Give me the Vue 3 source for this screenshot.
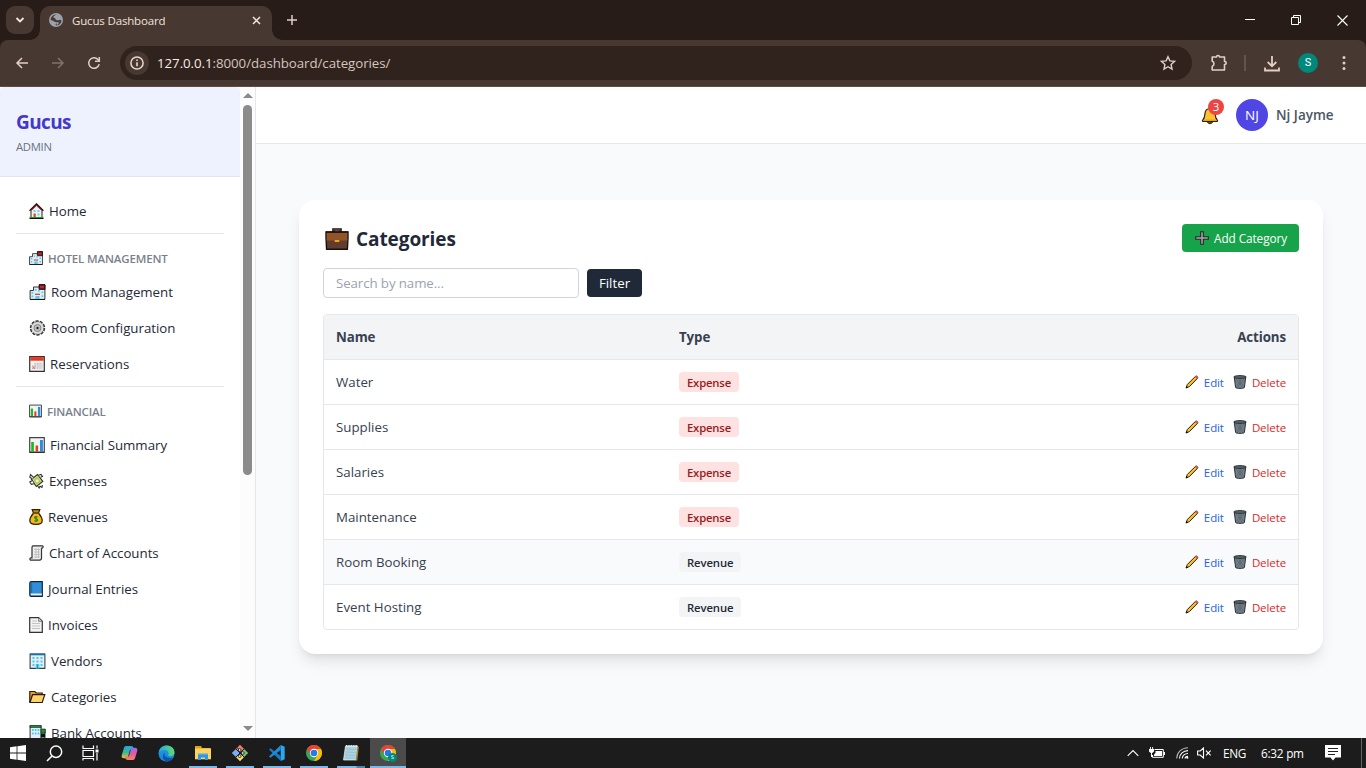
<script setup>
const sections = [
  { items: [{ icon: 'home', w: 15, label: 'Home' }] },
  {
    title: 'HOTEL MANAGEMENT', icon: 'hotel', w: 14,
    items: [
      { icon: 'hotel', w: 17, label: 'Room Management' },
      { icon: 'gear', w: 17, label: 'Room Configuration' },
      { icon: 'calendar', w: 16, label: 'Reservations' }
    ]
  },
  {
    title: 'FINANCIAL', icon: 'bars', w: 13,
    items: [
      { icon: 'bars', w: 16, label: 'Financial Summary' },
      { icon: 'money', w: 15, label: 'Expenses' },
      { icon: 'bag', w: 14, label: 'Revenues' },
      { icon: 'scroll', w: 15, label: 'Chart of Accounts' },
      { icon: 'book', w: 14, label: 'Journal Entries' },
      { icon: 'page', w: 14, label: 'Invoices' },
      { icon: 'office', w: 17, label: 'Vendors' },
      { icon: 'folder', w: 17, label: 'Categories' },
      { icon: 'bank', w: 17, label: 'Bank Accounts' }
    ]
  }
]
const rows = [
  { name: 'Water', type: 'Expense' },
  { name: 'Supplies', type: 'Expense' },
  { name: 'Salaries', type: 'Expense' },
  { name: 'Maintenance', type: 'Expense' },
  { name: 'Room Booking', type: 'Revenue', hover: true },
  { name: 'Event Hosting', type: 'Revenue' }
]
const tasks = [
  { icon: 't-files', open: true },
  { icon: 't-git', open: true },
  { icon: 't-code', open: true },
  { icon: 't-chrome', open: true },
  { icon: 't-note', open: true, stacked: true },
  { icon: 't-chrome', open: true, active: true }
]
</script>

<template>
  <div class="screen">
    <svg class="defs" aria-hidden="true">
      <defs>
        <linearGradient id="edgeA" x1="0" y1="0" x2="1" y2="0"><stop offset="0" stop-color="#2aa5e8" /><stop offset="1" stop-color="#5fdc6a" /></linearGradient>
        <linearGradient id="edgeB" x1="0" y1="0" x2="0" y2="1"><stop offset="0" stop-color="#1b9de2" /><stop offset="1" stop-color="#1683dc" /></linearGradient>
        <linearGradient id="copA" x1="0" y1="0" x2="0" y2="1"><stop offset="0" stop-color="#1fa3ee" /><stop offset=".55" stop-color="#3fb98a" /><stop offset="1" stop-color="#f2c230" /></linearGradient>
        <linearGradient id="copB" x1="0" y1="0" x2="0" y2="1"><stop offset="0" stop-color="#9a6be8" /><stop offset=".5" stop-color="#e25aa8" /><stop offset="1" stop-color="#f5855f" /></linearGradient>
      </defs>
      <symbol id="home" viewBox="0 0 15 16">
        <path d="M2 7.500V15h11V7.500L7.500 2z" fill="#f2f2f2" stroke="#222" />
        <path d="M.6 7.800 7.500 1l6.900 6.800" fill="none" stroke="#2b1110" stroke-width="1.500" /><path d="M2.500 7.400 7.500 2.700l5 4.700" fill="none" stroke="#c2312b" stroke-width=".8" />
        <path d="M4.500 7h2v2h-2zM8.500 7h2v2h-2zM8.500 10.500h2v2h-2z" fill="#5fd0f5" /><path d="M4.500 10.500h2.300V14.500H4.500z" fill="#e5472f" /><path d="M.5 14h14v1H.5z" fill="#1d9a25" /><path d="M.5 15h14v1H.5z" fill="#111" />
      </symbol>
      <symbol id="hotel" viewBox="0 0 16 16">
        <path d="M.6 6.500H4V3h6V1h5.400v14.400H.6z" fill="#e4edf2" stroke="#333" />
        <path d="M9.600.6h5.900v4.800H9.600z" fill="#7e1420" stroke="#111" stroke-width=".9" /><path d="M11.300 1.800v2.400M13.700 1.800v2.400M11.300 3h2.400" stroke="#ed3445" stroke-width=".8" />
        <path d="M2 8h1.700v1.700H2zM2 11.500h1.700v1.700H2zM5.300 5H7v1.700H5.300zM8.500 6h1.700v1.700H8.500zM12 7.500h1.700v1.700H12zM12 11.300h1.700V13H12zM6 12h4v3H6z" fill="#49cdf3" /><path d="M5.500 9.700h5v1.200h-5z" fill="#cf3b35" /><path d="M.5 15h15v.9H.5z" fill="#111" />
      </symbol>
      <symbol id="gear" viewBox="0 0 16 16">
        <circle cx="8" cy="8" r="6.900" fill="none" stroke="#333" stroke-width="1.600" stroke-dasharray="3.200 1.130" /><circle cx="8" cy="8" r="6.200" fill="#dedede" stroke="#555" stroke-width=".7" stroke-dasharray="2 1.200" /><circle cx="8" cy="8" r="3.500" fill="#c9c9c9" stroke="#777" stroke-width=".9" /><circle cx="8" cy="8" r="2" fill="#aaa" /><circle cx="8" cy="8" r="1.100" fill="#111" />
      </symbol>
      <symbol id="calendar" viewBox="0 0 16 16">
        <path d="M.7.7h14.600v14.600H.7z" fill="#f1f1f1" stroke="#333" stroke-width="1.200" /><path d="M1.200 1.100h13.600v3.600H1.200z" fill="#e8391d" /><path d="M5.500 7h7.800v5.800H3V9.500h2.500z" fill="#c4c4c4" /><path d="M5.500 9h7.800M3 11h10.300M7.500 7v6M10 7v6M12 7v6" stroke="#f7f7f7" stroke-width=".5" /><path d="m3.500 10.500 2.300 2.300m0-2.300-2.300 2.300" stroke="#ef6b4d" />
      </symbol>
      <symbol id="bars" viewBox="0 0 16 16">
        <path d="M.7.7h14.600v14.600H.7z" fill="#f3f3f3" stroke="#444" stroke-width="1.200" /><path d="M2.200 5h2.700v9.500H2.200z" fill="#18bd22" /><path d="M6.600 8.500h2.500v6H6.600z" fill="#e83c25" /><path d="M11 3h2.900v11.500H11z" fill="#278dde" /><path d="M1 14.700h14v.9H1z" fill="#222" />
      </symbol>
      <symbol id="money" viewBox="0 0 15 16">
        <path d="m2.500 6.300 6-4.800 5.300 7-6.500 5z" fill="#dbe59c" stroke="#303510" stroke-width="1.200" /><path d="m4.300 6.700 4-3.200 3.800 5-4.500 3.300z" fill="#b4c66c" /><circle cx="8.200" cy="7.700" r="1.500" fill="#edf3bf" /><path d="M4.800 4.700 1.500 1.500.8 4.200l2.400 1.500M3 7.700.8 9l1.500 2.300 2.700-.5M8.700 13l1.500 2 .8-1.700 2 1 .3-2.300M9.500 2.200l2.500-.7 1.500 2-2 .8" fill="#fff" stroke="#333" stroke-width="1.100" />
      </symbol>
      <symbol id="bag" viewBox="0 0 14 16">
        <path d="M4.200 4.500C2 7 .8 9 .8 11.700c0 2.600 1.700 3.600 6.200 3.600s6.200-1 6.200-3.600c0-2.700-1.200-4.700-3.400-7.200z" fill="#f7b51a" stroke="#2a2106" stroke-width="1.200" /><path d="M3.200.7h7.600L9.500 4.200h-5z" fill="#c78b13" stroke="#2a2106" stroke-width="1.200" /><path d="M4 4.500h6" stroke="#79500a" /><path d="M8.600 8c-3.500-1.300-3.800 1.500-1.500 1.900 2.500.4 1.700 3-1.700 1.800M7 6.900v6" fill="none" stroke="#16911e" stroke-width="1.100" />
      </symbol>
      <symbol id="scroll" viewBox="0 0 15 16">
        <path d="M4 .8h9.500c1 0 1 2.500-1 2.500V13c0 1.500-.8 2.200-2 2.200H2c-1.500 0-1.500-2.400 0-2.400h1V3c0-1 .3-2.200 1-2.200z" fill="#ededed" stroke="#333" stroke-width="1.200" /><path d="M5 4.500h6M5 7h6M5 9.500h6M5 12h6M7 3v10M9.500 3v10" stroke="#b4b4b4" stroke-width=".7" />
      </symbol>
      <symbol id="book" viewBox="0 0 14 16">
        <path d="M2.300.7h11v14.600H2.200C1.200 15.300.8 14.800.8 14V2.200c0-1 .5-1.500 1.500-1.500z" fill="#308fd8" stroke="#10263a" stroke-width="1.200" /><path d="M2.200 12.500h10.600v1.800H2.200c-.8 0-.8-1.800 0-1.800z" fill="#eee" /><path d="M2.700 1.500v10.500" stroke="#1d6bab" />
      </symbol>
      <symbol id="page" viewBox="0 0 14 16">
        <path d="M.7.7h9L13.300 4.200v11.100H.7z" fill="#f3f3f3" stroke="#333" stroke-width="1.200" /><path d="M9.500.8v3.600h3.700" fill="#ccc" stroke="#777" stroke-width=".8" /><path d="M3 4h5M3 6.500h8M3 9h8M3 11.500h8" stroke="#c2c2c2" stroke-width="1" />
      </symbol>
      <symbol id="office" viewBox="0 0 16 16">
        <path d="M.6 1h14.800v14.400H.6z" fill="#e7eef3" stroke="#34424d" stroke-width="1.100" /><path d="M.5.500h15v1.800H.5z" fill="#1b6fae" /><path d="M3 4h2v2H3zM7 4h2v2H7zM11 4h2v2h-2zM3 7.500h2v2H3zM7 7.500h2v2H7zM11 7.500h2v2h-2zM3 11h2v2H3zM11 11h2v2h-2zM6.200 11h3.600v4.500H6.200z" fill="#45cdf4" /><path d="M8 11.500V15" stroke="#1679b8" stroke-width=".7" />
      </symbol>
      <symbol id="folder" viewBox="0 0 17 16">
        <path d="M.8 13.500V2.500h5l1.400 1.500h6v2" fill="#f29b1c" stroke="#2a1d08" stroke-width="1.200" /><path d="M3.500 5.700h12.300L13.200 13.500H1z" fill="#ffd36b" stroke="#2a1d08" stroke-width="1.200" />
      </symbol>
      <symbol id="bank" viewBox="0 0 16 16">
        <path d="M.6 1h10.900v14.400H.6zM11.500 4.500h4v11h-4z" fill="#e7eef3" stroke="#34424d" stroke-width="1.100" /><path d="M.5.400h11.200v2H.5zM11.500 4h4.200v4h-4.200z" fill="#159b36" stroke="#111" stroke-width=".6" /><path d="M2.500 4h1.700v2H2.500zM5.300 4H7v2H5.300zM8.100 4h1.700v2H8.100zM2.500 7.500h1.700v2H2.500zM5.300 7.500H7v2H5.300zM8.100 7.500h1.700v2H8.100z" fill="#45cdf4" /><path d="M11.300 8.500h4.200v4h-4.200z" fill="#111" />
      </symbol>
      <symbol id="bell" viewBox="0 0 18 20">
        <path d="M9 3.500c-3.600 0-4.900 2.500-5.100 5.500-.2 3.200-.7 4.700-2.100 6-.6.500-.4 1.300.3 1.500h13.800c.7-.2.900-1 .3-1.500-1.400-1.300-1.900-2.800-2.100-6-.2-3-1.500-5.500-5.100-5.500z" fill="#ffc12e" stroke="#2a210b" stroke-width="1.200" /><path d="M6.500 17c.3 2.200 4.700 2.200 5 0z" fill="#b37914" stroke="#2a210b" /><path d="M2.700 15.200h12.600" stroke="#d88b17" stroke-width=".9" />
      </symbol>
      <symbol id="case" viewBox="0 0 24 22">
        <path d="M8.500 4V1.500h7V4" fill="none" stroke="#1b1210" stroke-width="2.600" /><path d="M8.800 3.800V1.700h6.400v2.100" fill="none" stroke="#6d4233" stroke-width="1" /><path d="M1 4h22v6l-.6 11.200H1.600L1 10z" fill="#613b2c" stroke="#171210" stroke-width="1.400" /><path d="M1.700 4.700h20.600v7.800H1.700z" fill="#935428" /><path d="M9.700 12h4.600v2H9.700z" fill="#eaa619" /><path d="M1 4h22" stroke="#171210" stroke-width="1.300" />
      </symbol>
      <symbol id="pencil" viewBox="0 0 14 14"><path d="M1 13 2.300 9.500 10.600 1.200c.9-.8 2.800.9 2 2L4.400 11.600z" fill="#ffbf1f" stroke="#272015" stroke-width="1" /><path d="m10 2 1-1c.8-.5 2.400.9 1.800 1.900l-1 1z" fill="#e4515f" /><path d="m.8 13.300.8-2.400 1.500 1.600z" fill="#111" /></symbol>
      <symbol id="trash" viewBox="0 0 14 14"><path d="m1.300 2.500 1.300 10c.8 1.200 8 1.200 8.800 0l1.300-10z" fill="#727f86" stroke="#293136" stroke-width="1" /><path d="m3 4 6.500 8.500M5.500 4l5 7M11 4l-6.500 8.500M8.500 4l-5 7" stroke="#49565d" stroke-width=".5" /><ellipse cx="7" cy="2" rx="6.300" ry="1.400" fill="#59656b" stroke="#22292d" stroke-width=".9" /></symbol>
      <symbol id="plus" viewBox="0 0 14 14"><path d="M5.700.7h2.600v5h5v2.600h-5v5H5.700v-5h-5V5.700h5z" fill="#a9a9a9" stroke="#252525" stroke-width="1.100" /></symbol>

      <symbol id="t-files" viewBox="0 0 18 18"><path d="M1 3V2h6l1 2h8.500v11H1z" fill="#e5a00d" /><path d="M1 4.500h16v10.800H1z" fill="#fcd462" /><path d="M4 16V10.500h10V16h-3v-2.500H7V16z" fill="#2f96e8" /><path d="M4 9.500h10v1.500H4z" fill="#4aa9ef" /></symbol>
      <symbol id="t-git" viewBox="0 0 18 18"><path d="m9 .8 4.100 4.100L9 9 4.900 4.900z" fill="#f27e70" /><path d="M4.900 4.900 9 9l-4.100 4.100L.8 9z" fill="#79aef5" /><path d="M13.100 4.900 17.200 9l-4.100 4.100L9 9z" fill="#77c267" /><path d="m9 9 4.100 4.100L9 17.200l-4.100-4.100z" fill="#ffe06f" /><path d="M6.200 3.600 11.500 9M8.700 5.500v7.500M4.900 4.900l8.200 8.200M13.100 4.900l-8.200 8.200" stroke="#1c1c1c" stroke-width="1" /><circle cx="8.700" cy="6" r="1.400" fill="#eee" stroke="#222" stroke-width=".9" /><circle cx="11.800" cy="9" r="1.400" fill="#eee" stroke="#222" stroke-width=".9" /><circle cx="8.700" cy="12.200" r="1.400" fill="#eee" stroke="#222" stroke-width=".9" /></symbol>
      <symbol id="t-code" viewBox="0 0 18 18"><path d="m12.700 1 4 1.800v12.400L12.700 17z" fill="#2aa7f0" /><path d="M1 5.500 2.500 4.300 12.700 12v5z" fill="#167bc4" /><path d="M1 12.500 2.500 13.700 12.700 6V1z" fill="#1c8bd8" /></symbol>
      <symbol id="t-chrome" viewBox="0 0 18 18"><circle cx="9" cy="9" r="8" fill="#34a853" /><path d="M9 5h6.930A8 8 0 0 1 9 17l3.460-6z" fill="#fbbc05" /><path d="M2.070 5A8 8 0 0 1 15.930 5H9v4l-3.460 2z" fill="#ea4335" /><circle cx="9" cy="9" r="4.200" fill="#fff" /><circle cx="9" cy="9" r="3.300" fill="#2878ed" /></symbol>
      <symbol id="t-note" viewBox="0 0 18 18"><path d="M3.500 2h12L14 16H1.500z" fill="#aad3e0" stroke="#e8f5f8" stroke-width=".7" /><path d="m15.500 2 1.300 1-1.500 13.500H13.500z" fill="#a88443" /><path d="m4 5 10.500.5M3.600 8l10.500.5M3.200 11l10.500.5M2.800 14h10.500" stroke="#8fbccb" stroke-width=".7" /><path d="M4 2h11.500" stroke="#e5eef0" stroke-width="2" stroke-dasharray="1 .7" /></symbol>
    </svg>

    <div class="tabstrip">
      <div class="tabsearch"><svg width="10" height="8" viewBox="0 0 10 8"><path d="M1.500 2 5 5.500 8.500 2" fill="none" stroke="#f4e6df" stroke-width="1.800" /></svg></div>
      <div class="tab">
        <svg width="14" height="14" viewBox="0 0 14 14"><circle cx="7" cy="7" r="7" fill="#9aa3ad" /><path d="M8 1.500c-2 .7-4 1.700-3.500 2.800.4.900 2 .8 2.200 2 .2 1.100 2.400 1.100 3.600.6.900-.4 1.800 0 2.200.900a5.500 5.500 0 0 1-5 4.700c-.9 0-1.200-.8-.6-1.500.8-1 .5-1.700-.7-2.100C4.500 8.500 4 7.500 2.500 7.300L1.500 7A5.700 5.700 0 0 1 8 1.500z" fill="#4a3a34" /><path d="M8 1.500c1.500.2 2.700.8 3.500 2-.7.800-2.700 1.400-3.400.5-.6-.8-1.200-.7-1.400-1.300-.2-.5.700-.8 1.300-1.200z" fill="#9aa3ad" /><path d="M7 9c1 .5 3.100 0 2.800 1.200-.2.900-1.300.8-1.900 2z" fill="#9aa3ad" /></svg>
        <span class="tabtitle">Gucus Dashboard</span>
        <svg class="tabx" width="9" height="9" viewBox="0 0 9 9"><path d="m1 1 7 7M8 1 1 8" stroke="#f4e6df" stroke-width="1.500" /></svg>
      </div>
      <svg class="newtab" width="12" height="12" viewBox="0 0 12 12"><path d="M6 1v10M1 6h10" stroke="#dfcdc5" stroke-width="1.500" /></svg>
      <div class="winbtns">
        <svg width="10" height="10" viewBox="0 0 10 10"><path d="M0 4.500h10" stroke="#fff" /></svg>
        <svg width="10" height="10" viewBox="0 0 10 10"><path d="M.5 2.500h7v7h-7zM2.500 2.500v-2h7v7h-2" fill="none" stroke="#fff" /></svg>
        <svg width="11" height="11" viewBox="0 0 11 11"><path d="m.5.5 10 10M10.500.5l-10 10" stroke="#fff" stroke-width="1.100" /></svg>
      </div>
    </div>
    <div class="toolbarwrap">
      <div class="toolbar">
        <svg class="ti back" width="14" height="14" viewBox="0 0 14 14"><path d="M13 7H2M7 2 2 7l5 5" fill="none" stroke="#e3cec5" stroke-width="1.500" /></svg>
        <svg class="ti fwd" width="14" height="14" viewBox="0 0 14 14"><path d="M1 7h11M7 2l5 5-5 5" fill="none" stroke="#83716a" stroke-width="1.500" /></svg>
        <svg class="ti reload" width="14" height="14" viewBox="0 0 14 14"><path d="M12.200 8.200A5.300 5.300 0 1 1 11 3.500L12.300 4.800" fill="none" stroke="#e3cec5" stroke-width="1.500" /><path d="M12.300 1v4.300H8" fill="none" stroke="#e3cec5" stroke-width="1.500" /></svg>
        <div class="omnibox">
          <div class="info"><svg width="14" height="14" viewBox="0 0 14 14"><circle cx="7" cy="7" r="6.100" fill="none" stroke="#e9d8d0" stroke-width="1.500" /><path d="M7 6.200v4M7 3.500v1.500" stroke="#e9d8d0" stroke-width="1.600" /></svg></div>
          <span class="url"><b>127.0.0.1</b>:8000/dashboard/categories/</span>
          <svg class="star" width="16" height="16" viewBox="0 0 16 16"><path d="m8 1.700 1.900 4.200 4.600.5-3.400 3.100.9 4.500L8 11.700 4 14l.9-4.500L1.500 6.400l4.600-.5z" fill="none" stroke="#e3cec5" stroke-width="1.400" /></svg>
        </div>
        <svg class="puzzle" width="18" height="18" viewBox="0 0 18 18"><path d="M2.200 3H6.500c0-2 3-2 3 0h5v4.500c2.300 0 2.300 3 0 3v5.500H2.200v-3.800c2.300-.5 2.300-4.500 0-5z" fill="none" stroke="#e3cec5" stroke-width="1.600" stroke-linejoin="round" /></svg>
        <i class="tsep"></i>
        <svg class="dl" width="16" height="17" viewBox="0 0 16 17"><path d="M8 1v10M3.700 7 8 11.300 12.300 7M1 12.500v3h14v-3" fill="none" stroke="#e3cec5" stroke-width="1.800" /></svg>
        <div class="profile">S</div>
        <svg class="dots" width="4" height="16" viewBox="0 0 4 16"><g fill="#e3cec5"><circle cx="2" cy="2.500" r="1.500" /><circle cx="2" cy="8" r="1.500" /><circle cx="2" cy="13.500" r="1.500" /></g></svg>
      </div>
    </div>

    <div class="page">
      <aside class="sidebar">
        <div class="scrollarea">
          <div class="brand"><h1>Gucus</h1><p>ADMIN</p></div>
          <nav>
            <section v-for="(s, i) in sections" :key="i" :class="{ divided: s.title }">
              <h3 v-if="s.title"><svg :width="s.w" height="14"><use :href="'#' + s.icon" /></svg>{{ s.title }}</h3>
              <a v-for="it in s.items" :key="it.label"><svg :width="it.w" height="16"><use :href="'#' + it.icon" /></svg>{{ it.label }}</a>
            </section>
          </nav>
        </div>
        <div class="scrollbar"><i class="up"></i><i class="thumb"></i><i class="down"></i></div>
      </aside>
      <div class="content">
        <header class="topbar">
          <div class="bellwrap"><svg width="18" height="20"><use href="#bell" /></svg><span class="count">3</span></div>
          <div class="avatar">NJ</div>
          <span class="username">Nj Jayme</span>
        </header>
        <main class="card">
          <div class="cardhead">
            <h2><svg width="24" height="22"><use href="#case" /></svg>Categories</h2>
            <button class="add"><svg width="14" height="14"><use href="#plus" /></svg>Add Category</button>
          </div>
          <div class="filters"><div class="search">Search by name...</div><button class="filter">Filter</button></div>
          <div class="table">
            <div class="row head"><span>Name</span><span>Type</span><span>Actions</span></div>
            <div v-for="r in rows" :key="r.name" class="row" :class="{ hover: r.hover }">
              <span class="name">{{ r.name }}</span>
              <span><em class="badge" :class="r.type.toLowerCase()">{{ r.type }}</em></span>
              <span class="actions">
                <a class="edit"><svg width="14" height="14"><use href="#pencil" /></svg>Edit</a>
                <a class="delete"><svg width="14" height="14"><use href="#trash" /></svg>Delete</a>
              </span>
            </div>
          </div>
        </main>
      </div>
    </div>

    <footer class="taskbar">
      <div class="sys"><svg width="16" height="16" viewBox="0 0 16 16"><path d="M0 2.300 6.600 1.300v6.300H0zM7.400 1.200 16 0v7.600H7.400zM0 8.400h6.600v6.300L0 13.700zM7.400 8.400H16V16l-8.600-1.200z" fill="#fff" /></svg></div>
      <div class="sys"><svg width="17" height="17" viewBox="0 0 17 17"><circle cx="10" cy="6.800" r="5.700" fill="none" stroke="#fff" stroke-width="1.500" /><path d="m6 11-5 5" stroke="#fff" stroke-width="1.600" /></svg></div>
      <div class="sys"><svg width="17" height="16" viewBox="0 0 17 16"><path d="M1 .5v3h10.500v-3M1 5.500h10.500v6H1zM1 15.500v-2h10.500v2M15 .5v3M15 8v7.500" fill="none" stroke="#fff" stroke-width="1.200" /><path d="M13.500 4.500h3v3h-3z" fill="#fff" /></svg></div>
      <div class="app first"><svg width="17" height="16" viewBox="0 0 17 16"><path d="M5.200 1h5c1.500 0 2 .8 2.300 2l.5 1.500h-2.500c-1 0-1.500.5-1.800 1.500l-1.600 5.500C6.700 13 6 13.300 4.700 13.300H3C1 13.300.2 12 .8 10L3 2.700C3.400 1.500 4 1 5.200 1z" fill="url(#copA)" /><path d="M11.800 15h-5c-1.500 0-2-.8-2.300-2L4 11.500h2.500c1 0 1.500-.5 1.800-1.500l1.600-5.500c.4-1.500 1.100-1.800 2.400-1.800H14c2 0 2.800 1.300 2.200 3.300L14 13.300c-.4 1.200-1 1.700-2.200 1.700z" fill="url(#copB)" /></svg></div>
      <div class="app"><svg width="17" height="17" viewBox="0 0 17 17"><circle cx="8.500" cy="8.500" r="8" fill="url(#edgeB)" /><path d="M.7 7.800C1.300 3.500 4.600.5 8.700.5c4.500 0 7.800 3.200 7.800 6.800 0 2.800-2 4-4 4-1.500 0-2.700-.6-2.200-1.600C11.500 6.800 9 5 6.500 5 3.600 5 1.500 6.500.7 7.800z" fill="url(#edgeA)" /><path d="M6.600 7.500c-1 3.800 2.500 6.300 8.700 5.200-1.400 2-3.800 3.900-6.800 3.800C4.500 15.500 3.800 10.500 6.600 7.500z" fill="#1653a8" /><path d="M10 10.300c-.7-1-.2-1.800.5-2.500L17 9.500c-.7 1.500-2.300 2.500-4.200 2.400-1.200 0-2.300-.6-2.800-1.600z" fill="#1c1c1c" opacity=".01" /></svg></div>
      <div v-for="(t, i) in tasks" :key="i" class="app" :class="{ open: t.open, active: t.active, stacked: t.stacked }">
        <svg width="18" height="18"><use :href="'#' + t.icon" /></svg>
        <span v-if="t.active" class="minip">S</span>
      </div>
      <div class="tray">
        <svg class="chev" width="12" height="8" viewBox="0 0 12 8"><path d="m.7 6.800 5.300-5.300 5.300 5.300" fill="none" stroke="#fff" stroke-width="1.100" /></svg>
        <svg class="batt" width="16" height="12" viewBox="0 0 16 12"><path d="M5.500 2.500h8.800v7.800H3.500V8" fill="none" stroke="#fff" /><path d="M6.500 4h6.500v5H5V7.500l1.500-1.500zM14.500 5H16v3h-1.500zM0 2h5v2.500L3.300 6H1.700L0 4.500zM1 0h.9v2H1zM3.200 0h.9v2h-.9zM2 6h1v4H2z" fill="#fff" /></svg>
        <svg class="wifi" width="13" height="12" viewBox="0 0 13 12"><g fill="none" stroke="#fff" stroke-width="1.100"><path d="M.7 11.500C.8 5.300 5.500.9 12 .7" opacity=".65" /><path d="M3.500 11.500C3.600 7 7.200 3.700 12 3.600M6.300 11.500c0-3 2.600-5 5.700-5M9 11.500c.1-1.300 1.500-2.300 3-2.300" /></g><circle cx="11.300" cy="10.700" r="1.100" fill="#fff" /></svg>
        <svg class="vol" width="15" height="12" viewBox="0 0 15 12"><path d="M.6 4h2.600L6.500 1v10L3.200 8H.6z" fill="none" stroke="#fff" stroke-width="1.100" /><path d="m9 3.700 4.600 4.600m0-4.600L9 8.300" stroke="#fff" stroke-width="1.200" /></svg>
        <span class="lang">ENG</span>
        <span class="clock">6:32 pm</span>
        <svg class="notif" width="16" height="16" viewBox="0 0 16 16"><path d="M0 0h16v12.500h-5.500L8 15.500l-2.500-3H0z" fill="#fff" /><path d="M3 3.500h10M3 6.500h10M3 9.500h7" stroke="#222" /></svg>
        <i class="edge"></i>
      </div>
    </footer>
  </div>
</template>

<style>
html, body { margin: 0; overflow: hidden; }
</style>
<style scoped>
.screen { width: 1366px; height: 768px; overflow: hidden; display: flex; flex-direction: column; position: relative; font-family: "Open Sans", "Noto Sans", sans-serif; color: #1f2937; }
.screen * { box-sizing: border-box; }
.defs { position: absolute; width: 0; height: 0; }
svg { display: block; flex: none; }
h1, h2, h3, p { margin: 0; }
button { border: 0; font-family: inherit; padding: 0; }
span, a, h1, h2, h3 { white-space: nowrap; }

.tabstrip { height: 40px; background: #281c18; display: flex; align-items: center; padding-left: 6px; flex: none; }
.tabsearch { width: 28px; height: 28px; border-radius: 9px; background: #473831; display: flex; align-items: center; justify-content: center; }
.tab { position: relative; margin: 6px 0 0 6px; align-self: stretch; width: 232px; background: #473831; border-radius: 10px 10px 0 0; display: flex; align-items: center; padding: 0 11px 6px 9px; }
.tab::before, .tab::after { content: ""; position: absolute; bottom: 0; width: 10px; height: 10px; }
.tab::before { left: -10px; background: radial-gradient(circle at 0 0, transparent 9.500px, #473831 10px); }
.tab::after { right: -10px; background: radial-gradient(circle at 100% 0, transparent 9.500px, #473831 10px); }
.tabtitle { margin-left: 9px; font-size: 11.500px; color: #f0e3dc; letter-spacing: -.16px; }
.tabx { margin-left: auto; }
.newtab { margin-left: 14px; }
.winbtns { margin-left: auto; display: flex; gap: 36px; margin-right: 18px; align-items: center; }
.toolbarwrap { background: #281c18; flex: none; }
.toolbar { height: 47px; background: #473831; border-radius: 8px 8px 0 0; border-bottom: 1px solid #5b4d47; display: flex; align-items: center; padding-left: 15px; }
.fwd { margin-left: 22px; }
.reload { margin-left: 22px; }
.omnibox { margin-left: 19px; width: 1072px; height: 34px; border-radius: 17px; background: #30231d; display: flex; align-items: center; padding: 0 16px 0 5px; }
.info { width: 24px; height: 24px; border-radius: 50%; background: #473831; display: flex; align-items: center; justify-content: center; }
.url { margin-left: 8px; font-size: 13.300px; color: #d6c5bd; letter-spacing: -.06px; }
.url b { font-weight: 400; color: #f8ece6; }
.star { margin-left: auto; }
.puzzle { margin-left: 18px; }
.tsep { width: 2px; height: 16px; background: #65534c; margin-left: 16px; }
.dl { margin-left: 18px; }
.profile { margin-left: 18px; width: 20px; height: 20px; border-radius: 50%; background: #00897b; color: #fff; font: 11px/20px Roboto, sans-serif; text-align: center; }
.dots { margin-left: 24px; }

.page { height: 651px; flex: none; display: flex; overflow: hidden; background: #f9fafb; }
.sidebar { width: 256px; flex: none; background: #fff; border-right: 1px solid #e5e7eb; display: flex; }
.scrollarea { width: 240px; overflow: hidden; }
.brand { height: 90px; background: #eef2ff; border-bottom: 1px solid #e0e4f0; border-radius: 4px 4px 0 0; padding: 21px 16px 0; }
.brand h1 { font-size: 19px; line-height: 28px; font-weight: 700; color: #4338ca; letter-spacing: -.6px; }
.brand p { font-size: 11.300px; line-height: 16px; color: #6b7280; margin-top: 3px; letter-spacing: -.3px; }
nav { padding: 16px 16px 0; }
nav a, nav h3 { display: flex; align-items: center; gap: 5px; padding-left: 13px; }
nav a { height: 36px; font-size: 13.300px; color: #1f2937; letter-spacing: -.02px; }
nav h3 { height: 40px; padding-top: 8px; font-size: 11.500px; font-weight: 600; color: #7a818d; letter-spacing: -.14px; }
nav .divided { border-top: 1px solid #e5e7eb; margin-top: 4px; }
.scrollbar { width: 15px; background: #fcfcfc; display: flex; flex-direction: column; align-items: center; padding: 6px 0 7px; }
.up, .down { width: 0; border: 5px solid transparent; }
.up { border-top: 0; border-bottom-color: #8a8a8a; }
.down { border-bottom: 0; border-top-color: #8a8a8a; margin-top: auto; }
.thumb { width: 9px; height: 370px; margin-top: 7px; background: #8b8b8b; border-radius: 5px; }
.content { flex: 1; display: flex; flex-direction: column; align-items: center; }
.topbar { align-self: stretch; height: 57px; flex: none; background: #fff; border-bottom: 1px solid #e5e7eb; display: flex; align-items: center; justify-content: flex-end; padding-right: 32px; }
.bellwrap { position: relative; margin-right: 17px; }
.count { position: absolute; left: 7px; top: -6px; width: 16px; height: 16px; border-radius: 50%; background: #ef4444; color: #fff; font-size: 11.500px; line-height: 16px; text-align: center; }
.avatar { width: 32px; height: 32px; border-radius: 50%; background: #4f46e5; color: #fff; font-size: 13.500px; line-height: 32px; text-align: center; }
.username { margin-left: 8px; width: 58px; font-size: 13.500px; font-weight: 600; color: #4b5563; }
.card { margin-top: 56px; width: 1024px; height: 454px; background: #fff; border-radius: 16px; padding: 24px; box-shadow: 0 10px 15px -3px rgba(0, 0, 0, .1), 0 4px 6px -4px rgba(0, 0, 0, .1); }
.cardhead { height: 28px; display: flex; justify-content: space-between; align-items: center; }
h2 { display: flex; align-items: center; gap: 7px; padding: 2px 0 0 2px; font-size: 19px; font-weight: 700; letter-spacing: -.08px; }
.add { width: 117px; height: 28px; border-radius: 4px; background: #16a34a; color: #fff; font-size: 11.800px; display: flex; align-items: center; padding-left: 13px; gap: 5px; letter-spacing: -.08px; white-space: nowrap; }
.filters { margin-top: 16px; height: 30px; display: flex; align-items: center; gap: 8px; }
.search { width: 256px; height: 30px; border: 1px solid #d1d5db; border-radius: 4px; padding-left: 12px; line-height: 28px; font-size: 13.300px; color: #9ca3af; letter-spacing: -.1px; }
.filter { width: 55px; height: 28px; border-radius: 4px; background: #1f2937; color: #fff; font-size: 13.300px; }
.table { margin-top: 16px; border: 1px solid #e5e7eb; border-radius: 4px; overflow: hidden; }
.row { height: 45px; border-bottom: 1px solid #e5e7eb; display: grid; grid-template-columns: 343px 1fr 300px; align-items: center; font-size: 13.300px; color: #374151; }
.row:last-child { height: 44px; border-bottom: 0; }
.row > span { padding: 0 12px; }
.row > span:last-child { text-align: right; }
.head { background: #f3f4f6; font-weight: 700; letter-spacing: -.1px; }
.hover { background: #f9fafb; }
.badge { display: inline-block; vertical-align: middle; height: 20px; line-height: 19px; border-radius: 4px; padding: 1px 8px 0; font-size: 11.300px; font-style: normal; font-weight: 600; letter-spacing: -.18px; }
.expense { background: #fee2e2; color: #991b1b; }
.revenue { background: #f3f4f6; color: #1f2937; letter-spacing: -.1px; }
.actions { display: flex; justify-content: flex-end; gap: 9px; font-size: 11.500px; letter-spacing: -.1px; }
.actions a { display: flex; align-items: center; gap: 5px; }
.edit { color: #2563eb; }
.delete { color: #dc2626; }

.taskbar { height: 30px; flex: none; background: #1c1c1c; display: flex; color: #fff; }
.sys { width: 36px; display: flex; align-items: center; justify-content: center; }
.app { position: relative; width: 36px; margin-right: 1px; display: flex; align-items: center; justify-content: center; }
.first { margin-left: 3px; }
.open::after { content: ""; position: absolute; left: 4px; right: 4px; bottom: 0; height: 2px; background: #76b9ed; }
.stacked::after { background: linear-gradient(90deg, #76b9ed 19px, #4e83ac 20px); }
.active { background: #4b4b4b; }
.active::after { left: 0; right: 0; }
.minip { position: absolute; left: 18px; top: 15px; width: 9px; height: 9px; border-radius: 50%; background: #00897b; font-size: 6px; line-height: 9px; text-align: center; }
.tray { margin-left: auto; display: flex; align-items: center; font-size: 11.800px; }
.batt { margin-left: 10px; }
.wifi { margin-left: 11px; }
.vol { margin-left: 8px; }
.lang { margin-left: 11px; width: 24px; letter-spacing: -.4px; padding-bottom: 1px; }
.clock { margin-left: 14px; width: 44px; letter-spacing: -.25px; padding-bottom: 1px; }
.notif { margin-left: 20px; }
.edge { width: 1px; height: 30px; background: #666; margin: 0 4px 0 20px; }
</style>
